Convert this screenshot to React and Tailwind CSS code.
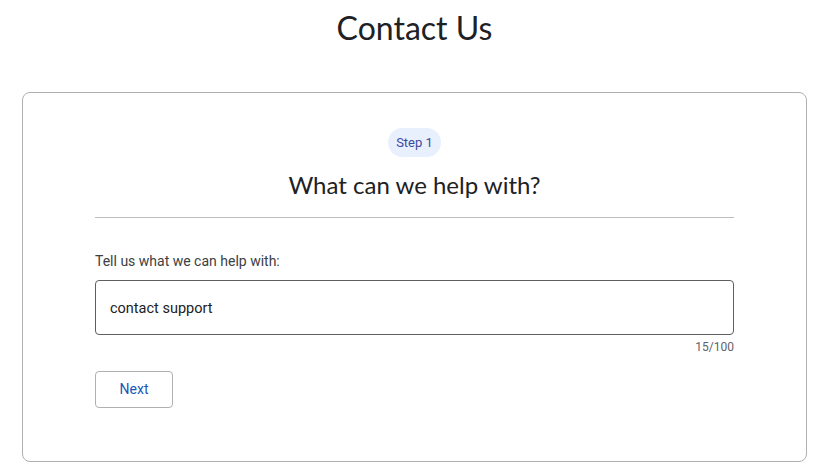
export default function App() {
  return (
    <div className="min-h-[464px] bg-white text-[#202124] font-[Roboto,sans-serif]">
      <h1 className="pt-[8px] h-[48px] text-center text-[32px] leading-[40px] font-normal text-[#202124] font-[Lato,sans-serif]">
        Contact Us
      </h1>
      <div className="mx-[22px] mt-[44px] rounded-[8px] border border-[#b0b0b0] px-[72px] pt-[35px] pb-[53px]">
        <div className="flex flex-col items-center">
          <span className="rounded-full bg-[#e8f0fe] px-[8px] h-[29px] flex items-center text-[13px] text-[#3c4a9e]">
            Step 1
          </span>
          <h2 className="mt-[14px] text-[24px] leading-[28px] text-[#202124] font-[Lato,sans-serif]">
            What can we help with?
          </h2>
        </div>
        <div className="mt-[18px] h-px bg-[#bdbdbd]" />
        <label className="block mt-[33px] text-[14px] leading-[20px] text-[#3c4043]">
          Tell us what we can help with:
        </label>
        <div className="mt-[9px] h-[55px] rounded-[4px] border border-[#5f5f5f] flex items-center px-[14px] pt-[3px] text-[14.5px] text-[#202124]">
          contact support
        </div>
        <div className="mt-[4px] text-right text-[12px] leading-[16px] text-[#5f6368]">
          15/100
        </div>
        <button className="mt-[16px] h-[37px] w-[78px] rounded-[4px] border border-[#b0b0b0] text-[14px] font-normal text-[#1a57b8] bg-white">
          Next
        </button>
      </div>
    </div>
  );
}
